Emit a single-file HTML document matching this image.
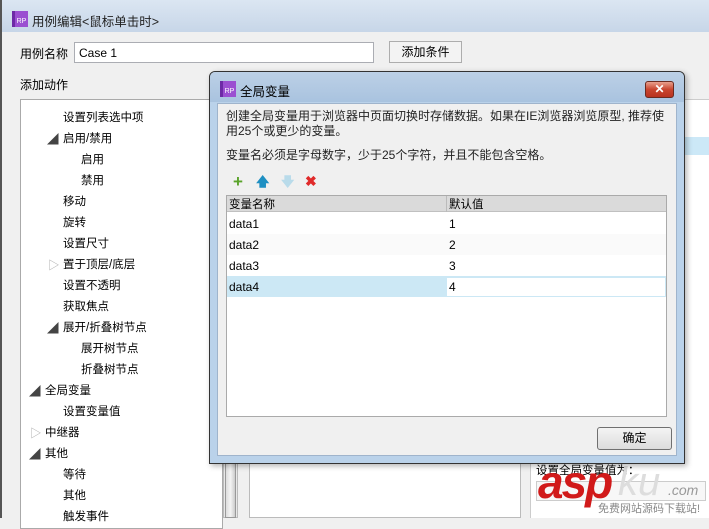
<!DOCTYPE html>
<html><head><meta charset="utf-8"><style>
*{margin:0;padding:0;box-sizing:border-box}
body{width:709px;height:518px;overflow:hidden;background:#f0f0f0;font-family:"Liberation Sans","Noto Sans CJK SC",sans-serif;font-size:12px;color:#000;position:relative}
.a{position:absolute}
.rp{position:absolute;width:16px;height:16px;background:linear-gradient(90deg,#6d2aa6 0 3px,#9b4fd1 3px);color:#fff;font-size:7px;line-height:22px;text-align:center;padding-left:3px;font-family:"Liberation Sans",sans-serif}
.tree div{position:absolute;font-size:11.5px;white-space:nowrap}
.tri{font-size:7px;color:#444;line-height:10px}
</style></head><body>
<div class="a" style="left:0;top:0;width:709px;height:32px;background:linear-gradient(#dbe6f2,#c7d6e8);border-left:2px solid #555"></div>
<div class="rp" style="left:12px;top:11px">RP</div>
<div class="a" style="left:32px;top:11px;font-size:12.5px;color:#222">用例编辑&lt;鼠标单击时&gt;</div>
<div class="a" style="left:0;top:32px;width:2px;height:486px;background:#555"></div>
<div class="a" style="left:20px;top:45px">用例名称</div>
<div class="a" style="left:74px;top:42px;width:300px;height:21px;background:#fff;border:1px solid #abadb3;padding:3px 0 0 4px">Case 1</div>
<div class="a" style="left:389px;top:41px;width:73px;height:22px;background:#f3f3f3;border:1px solid #adadad;text-align:center;line-height:20px">添加条件</div>
<div class="a" style="left:20px;top:76px">添加动作</div>
<div class="a tree" style="left:20px;top:99px;width:203px;height:430px;background:#fff;border:1px solid #aaa">
<div style="left:42px;top:9px">设置列表选中项</div>
<div class="tri" style="left:26px;top:35px">◢</div><div style="left:42px;top:30px">启用/禁用</div>
<div style="left:60px;top:51px">启用</div>
<div style="left:60px;top:72px">禁用</div>
<div style="left:42px;top:93px">移动</div>
<div style="left:42px;top:114px">旋转</div>
<div style="left:42px;top:135px">设置尺寸</div>
<div class="tri" style="left:27px;top:161px;color:#aaa">▷</div><div style="left:42px;top:156px">置于顶层/底层</div>
<div style="left:42px;top:177px">设置不透明</div>
<div style="left:42px;top:198px">获取焦点</div>
<div class="tri" style="left:26px;top:224px">◢</div><div style="left:42px;top:219px">展开/折叠树节点</div>
<div style="left:60px;top:240px">展开树节点</div>
<div style="left:60px;top:261px">折叠树节点</div>
<div class="tri" style="left:8px;top:287px">◢</div><div style="left:24px;top:282px">全局变量</div>
<div style="left:42px;top:303px">设置变量值</div>
<div class="tri" style="left:9px;top:329px;color:#aaa">▷</div><div style="left:24px;top:324px">中继器</div>
<div class="tri" style="left:8px;top:350px">◢</div><div style="left:24px;top:345px">其他</div>
<div style="left:42px;top:366px">等待</div>
<div style="left:42px;top:387px">其他</div>
<div style="left:42px;top:408px">触发事件</div>
</div>
<div class="a" style="left:223px;top:99px;width:15px;height:419px;background:#e8e8e8;border:1px solid #bbb"></div>
<div class="a" style="left:225px;top:440px;width:11px;height:78px;background:linear-gradient(90deg,#ddd,#f4f4f4,#ccc);border:1px solid #999"></div>
<div class="a" style="left:249px;top:99px;width:272px;height:419px;background:#fff;border:1px solid #bbb"></div>
<div class="a" style="left:530px;top:99px;width:179px;height:419px;background:#fff;border-top:1px solid #ccc;border-left:1px solid #ccc"></div>
<div class="a" style="left:530px;top:137px;width:179px;height:18px;background:#cce8f7"></div>
<div class="a" style="left:536px;top:462px;font-size:11.5px">设置全局变量值为：</div>
<div class="a" style="left:536px;top:481px;width:170px;height:20px;background:#f7f7f7;border:1px solid #ccc"></div>
<div class="a" style="left:538px;top:455px;font:italic bold 46px 'Liberation Sans',sans-serif;color:#d11a1a;letter-spacing:-2px">asp</div>
<div class="a" style="left:618px;top:460px;font:italic 40px 'Liberation Sans',sans-serif;color:#ddd">ku</div>
<div class="a" style="left:668px;top:482px;font:italic 14px 'Liberation Sans',sans-serif;color:#999">.com</div>
<div class="a" style="left:598px;top:500px;font-size:11px;color:#888">免费网站源码下载站!</div>
<div class="a" style="left:209px;top:71px;width:476px;height:393px;background:#bad2ea;border:1px solid #333;border-radius:6px 6px 0 0;box-shadow:2px 2px 6px rgba(0,0,0,.3)"></div>
<div class="a" style="left:210px;top:72px;width:474px;height:30px;background:linear-gradient(#bcd0e6,#a9c3df);border-radius:5px 5px 0 0"></div>
<div class="rp" style="left:220px;top:81px">RP</div>
<div class="a" style="left:240px;top:81px;font-size:12.5px">全局变量</div>
<div class="a" style="left:645px;top:81px;width:29px;height:17px;background:linear-gradient(#e8a08e,#c9452f 50%,#b83220);border:1px solid #6b2a20;border-radius:3px;color:#fff;font-weight:bold;text-align:center;line-height:15px;font-size:12px">✕</div>
<div class="a" style="left:217px;top:103px;width:460px;height:353px;background:#f0f0f0;border:1px solid #9fb4cc"></div>
<div class="a" style="left:226px;top:109px;width:440px;font-size:12px;line-height:15px;color:#222">创建全局变量用于浏览器中页面切换时存储数据。如果在IE浏览器浏览原型, 推荐使用25个或更少的变量。</div>
<div class="a" style="left:226px;top:146px;font-size:12px;color:#222">变量名必须是字母数字，少于25个字符，并且不能包含空格。</div>
<div class="a" style="left:233px;top:172px;color:#5aa32a;font-weight:bold;font-size:17px">+</div>
<div class="a" style="left:256px;top:173px;color:#1e8fc2;font-weight:bold;font-size:13px">🡅</div>
<div class="a" style="left:281px;top:173px;color:#b9dbea;font-weight:bold;font-size:13px">🡇</div>
<div class="a" style="left:305px;top:173px;color:#e02a2a;font-weight:bold;font-size:14px">✖</div>
<div class="a" style="left:226px;top:195px;width:441px;height:222px;background:#fff;border:1px solid #aaa"></div>
<div class="a" style="left:227px;top:196px;width:439px;height:16px;background:#dadada;border-bottom:1px solid #c0c0c0"></div>
<div class="a" style="left:446px;top:196px;width:1px;height:16px;background:#bbb"></div>
<div class="a" style="left:229px;top:196px;font-size:11.5px">变量名称</div>
<div class="a" style="left:449px;top:196px;font-size:11.5px">默认值</div>
<div class="a" style="left:227px;top:234px;width:439px;height:21px;background:#fafafa"></div>
<div class="a" style="left:227px;top:276px;width:439px;height:21px;background:#cce8f5"></div>
<div class="a" style="left:447px;top:278px;width:218px;height:18px;background:#fff"></div>
<div class="a" style="left:229px;top:217px;font-size:12px">data1</div><div class="a" style="left:449px;top:217px">1</div>
<div class="a" style="left:229px;top:238px;font-size:12px">data2</div><div class="a" style="left:449px;top:238px">2</div>
<div class="a" style="left:229px;top:259px;font-size:12px">data3</div><div class="a" style="left:449px;top:259px">3</div>
<div class="a" style="left:229px;top:280px;font-size:12px">data4</div><div class="a" style="left:449px;top:280px">4</div>
<div class="a" style="left:597px;top:427px;width:75px;height:23px;background:linear-gradient(#f4f4f4,#dcdcdc);border:1px solid #707070;border-radius:3px;text-align:center;line-height:21px">确定</div>
</body></html>
